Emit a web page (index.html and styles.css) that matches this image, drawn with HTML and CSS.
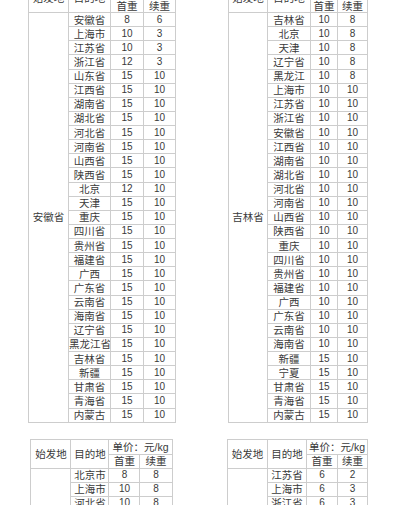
FILE: index.html
```html
<!DOCTYPE html>
<html lang="zh-CN">
<head>
<meta charset="utf-8">
<title>运费表</title>
<link rel="stylesheet" href="styles.css">
</head>
<body>
<div class="sheet">
  <table class="rate t-tl">
    <colgroup><col style="width:40px"><col style="width:42px"><col style="width:33px"><col style="width:32px"></colgroup>
    <thead>
      <tr class="h1"><th rowspan="2">始发地</th><th rowspan="2">目的地</th><th colspan="2">单价：元/kg</th></tr>
      <tr class="h2"><th>首重</th><th>续重</th></tr>
    </thead>
    <tbody>
      <tr><td rowspan="29">安徽省</td><td>安徽省</td><td class="n">8</td><td class="n">6</td></tr>
      <tr><td>上海市</td><td class="n">10</td><td class="n">3</td></tr>
      <tr><td>江苏省</td><td class="n">10</td><td class="n">3</td></tr>
      <tr><td>浙江省</td><td class="n">12</td><td class="n">3</td></tr>
      <tr><td>山东省</td><td class="n">15</td><td class="n">10</td></tr>
      <tr><td>江西省</td><td class="n">15</td><td class="n">10</td></tr>
      <tr><td>湖南省</td><td class="n">15</td><td class="n">10</td></tr>
      <tr><td>湖北省</td><td class="n">15</td><td class="n">10</td></tr>
      <tr><td>河北省</td><td class="n">15</td><td class="n">10</td></tr>
      <tr><td>河南省</td><td class="n">15</td><td class="n">10</td></tr>
      <tr><td>山西省</td><td class="n">15</td><td class="n">10</td></tr>
      <tr><td>陕西省</td><td class="n">15</td><td class="n">10</td></tr>
      <tr><td>北京</td><td class="n">12</td><td class="n">10</td></tr>
      <tr><td>天津</td><td class="n">15</td><td class="n">10</td></tr>
      <tr><td>重庆</td><td class="n">15</td><td class="n">10</td></tr>
      <tr><td>四川省</td><td class="n">15</td><td class="n">10</td></tr>
      <tr><td>贵州省</td><td class="n">15</td><td class="n">10</td></tr>
      <tr><td>福建省</td><td class="n">15</td><td class="n">10</td></tr>
      <tr><td>广西</td><td class="n">15</td><td class="n">10</td></tr>
      <tr><td>广东省</td><td class="n">15</td><td class="n">10</td></tr>
      <tr><td>云南省</td><td class="n">15</td><td class="n">10</td></tr>
      <tr><td>海南省</td><td class="n">15</td><td class="n">10</td></tr>
      <tr><td>辽宁省</td><td class="n">15</td><td class="n">10</td></tr>
      <tr><td>黑龙江省</td><td class="n">15</td><td class="n">10</td></tr>
      <tr><td>吉林省</td><td class="n">15</td><td class="n">10</td></tr>
      <tr><td>新疆</td><td class="n">15</td><td class="n">10</td></tr>
      <tr><td>甘肃省</td><td class="n">15</td><td class="n">10</td></tr>
      <tr><td>青海省</td><td class="n">15</td><td class="n">10</td></tr>
      <tr><td>内蒙古</td><td class="n">15</td><td class="n">10</td></tr>
    </tbody>
  </table>

  <table class="rate t-tr">
    <colgroup><col style="width:39px"><col style="width:43px"><col style="width:27px"><col style="width:30px"></colgroup>
    <thead>
      <tr class="h1"><th rowspan="2">始发地</th><th rowspan="2">目的地</th><th colspan="2">单价：元/kg</th></tr>
      <tr class="h2"><th>首重</th><th>续重</th></tr>
    </thead>
    <tbody>
      <tr><td rowspan="29">吉林省</td><td>吉林省</td><td class="n">10</td><td class="n">8</td></tr>
      <tr><td>北京</td><td class="n">10</td><td class="n">8</td></tr>
      <tr><td>天津</td><td class="n">10</td><td class="n">8</td></tr>
      <tr><td>辽宁省</td><td class="n">10</td><td class="n">8</td></tr>
      <tr><td>黑龙江</td><td class="n">10</td><td class="n">8</td></tr>
      <tr><td>上海市</td><td class="n">10</td><td class="n">10</td></tr>
      <tr><td>江苏省</td><td class="n">10</td><td class="n">10</td></tr>
      <tr><td>浙江省</td><td class="n">10</td><td class="n">10</td></tr>
      <tr><td>安徽省</td><td class="n">10</td><td class="n">10</td></tr>
      <tr><td>江西省</td><td class="n">10</td><td class="n">10</td></tr>
      <tr><td>湖南省</td><td class="n">10</td><td class="n">10</td></tr>
      <tr><td>湖北省</td><td class="n">10</td><td class="n">10</td></tr>
      <tr><td>河北省</td><td class="n">10</td><td class="n">10</td></tr>
      <tr><td>河南省</td><td class="n">10</td><td class="n">10</td></tr>
      <tr><td>山西省</td><td class="n">10</td><td class="n">10</td></tr>
      <tr><td>陕西省</td><td class="n">10</td><td class="n">10</td></tr>
      <tr><td>重庆</td><td class="n">10</td><td class="n">10</td></tr>
      <tr><td>四川省</td><td class="n">10</td><td class="n">10</td></tr>
      <tr><td>贵州省</td><td class="n">10</td><td class="n">10</td></tr>
      <tr><td>福建省</td><td class="n">10</td><td class="n">10</td></tr>
      <tr><td>广西</td><td class="n">10</td><td class="n">10</td></tr>
      <tr><td>广东省</td><td class="n">10</td><td class="n">10</td></tr>
      <tr><td>云南省</td><td class="n">10</td><td class="n">10</td></tr>
      <tr><td>海南省</td><td class="n">10</td><td class="n">10</td></tr>
      <tr><td>新疆</td><td class="n">15</td><td class="n">10</td></tr>
      <tr><td>宁夏</td><td class="n">15</td><td class="n">10</td></tr>
      <tr><td>甘肃省</td><td class="n">15</td><td class="n">10</td></tr>
      <tr><td>青海省</td><td class="n">15</td><td class="n">10</td></tr>
      <tr><td>内蒙古</td><td class="n">15</td><td class="n">10</td></tr>
    </tbody>
  </table>

  <table class="rate t-bl">
    <colgroup><col style="width:40px"><col style="width:38px"><col style="width:31px"><col style="width:32px"></colgroup>
    <thead>
      <tr class="h1"><th rowspan="2">始发地</th><th rowspan="2">目的地</th><th colspan="2">单价：元/kg</th></tr>
      <tr class="h2"><th>首重</th><th>续重</th></tr>
    </thead>
    <tbody>
      <tr><td rowspan="6">北京市</td><td>北京市</td><td class="n">8</td><td class="n">8</td></tr>
      <tr><td>上海市</td><td class="n">10</td><td class="n">8</td></tr>
      <tr><td>河北省</td><td class="n">10</td><td class="n">8</td></tr>
      <tr><td>天津市</td><td class="n">10</td><td class="n">8</td></tr>
      <tr><td>山西省</td><td class="n">10</td><td class="n">8</td></tr>
      <tr><td>山东省</td><td class="n">10</td><td class="n">8</td></tr>
    </tbody>
  </table>

  <table class="rate t-br">
    <colgroup><col style="width:40px"><col style="width:39px"><col style="width:31px"><col style="width:30px"></colgroup>
    <thead>
      <tr class="h1"><th rowspan="2">始发地</th><th rowspan="2">目的地</th><th colspan="2">单价：元/kg</th></tr>
      <tr class="h2"><th>首重</th><th>续重</th></tr>
    </thead>
    <tbody>
      <tr><td rowspan="6">江苏省</td><td>江苏省</td><td class="n">6</td><td class="n">2</td></tr>
      <tr><td>上海市</td><td class="n">6</td><td class="n">3</td></tr>
      <tr><td>浙江省</td><td class="n">6</td><td class="n">3</td></tr>
      <tr><td>安徽省</td><td class="n">8</td><td class="n">6</td></tr>
      <tr><td>江西省</td><td class="n">10</td><td class="n">8</td></tr>
      <tr><td>福建省</td><td class="n">10</td><td class="n">8</td></tr>
    </tbody>
  </table>
</div>
</body>
</html>
```

FILE: styles.css
```css
html, body {
  margin: 0;
  padding: 0;
  background: #ffffff;
}

body {
  font-family: "Liberation Sans", "Noto Sans CJK SC", sans-serif;
  font-size: 10.5px;
  color: #3a3a3a;
}

.sheet {
  display: grid;
  grid-template-columns: 28px 147px 53px 139px 1fr;
  row-gap: 16px;
  margin-top: -17px;
  align-items: start;
}

.t-tl { grid-column: 2; grid-row: 1; width: 147px; }
.t-tr { grid-column: 4; grid-row: 1; width: 139px; }
.t-bl { grid-column: 2; grid-row: 2; width: 141px; justify-self: center; }
.t-br { grid-column: 4; grid-row: 2; width: 140px; justify-self: center; }

.rate {
  border-collapse: collapse;
  table-layout: fixed;
}

.rate th,
.rate td {
  border: 1px solid #cdcdcd;
  padding: 0;
  text-align: center;
  vertical-align: middle;
  white-space: nowrap;
  overflow: hidden;
  font-weight: normal;
  line-height: 12px;
}

.rate .h1 { height: 15px; }
.rate .h2 { height: 14px; }
.rate tbody tr { height: 14.14px; }

.rate td.n {
  font-size: 10px;
}
```
